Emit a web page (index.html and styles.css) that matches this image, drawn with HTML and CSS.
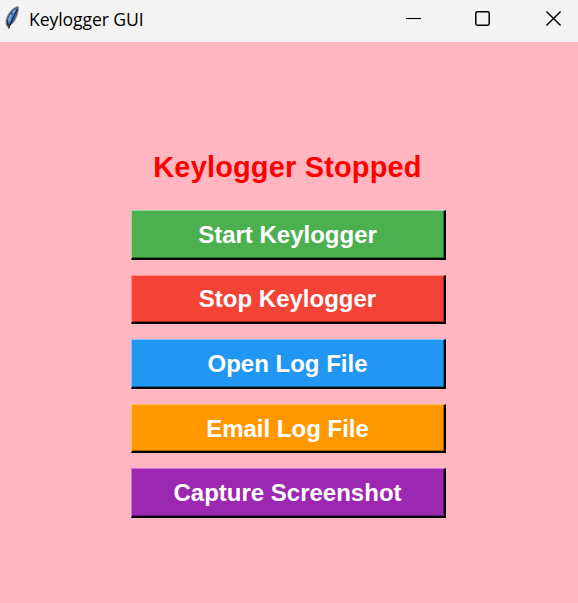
FILE: index.html
```html
<!DOCTYPE html>
<html lang="en">
<head>
<meta charset="utf-8">
<title>Keylogger GUI</title>
<link rel="stylesheet" href="styles.css">
</head>
<body>
<div class="window">
  <header class="titlebar">
    <svg class="feather" width="18" height="26" viewBox="0 0 18 26">
      <path d="M13.8 1.5 C9 2 4.5 8 2.2 14 L2 19.5 L4.6 23.3 L5.6 20.6 C10.5 18.5 14.3 10 14.6 2.5 Z" fill="#4a5360" stroke="#9a9ea4" stroke-width="1"/>
      <path d="M13.2 2.8 C8.5 5 4.5 10.5 3.4 17 L5.5 19 C10 16 13 9 13.2 2.8 Z" fill="#3b82d4"/>
      <path d="M11 5.2 C7.5 8.5 5.6 12.5 4.5 16" fill="none" stroke="#86b6ec" stroke-width="1.3"/>
      <path d="M13.4 4 C11 9.5 7.4 15.5 4.7 23.5" fill="none" stroke="#1b2129" stroke-width="1.1"/>
      <path d="M8 7.5 L7.6 10 M2.7 15 L4.4 20.5" fill="none" stroke="#1b2129" stroke-width="1"/>
    </svg>
    <span class="title">Keylogger GUI</span>
    <svg class="controls" width="156" height="16" viewBox="0 0 156 16">
      <path d="M0 8.5 H15" stroke="#000" stroke-width="1.1"/>
      <rect x="69.8" y="1.8" width="13.4" height="13.4" rx="1.6" fill="none" stroke="#000" stroke-width="1.5"/>
      <path d="M140.4 1.4 L154.6 15.6 M154.6 1.4 L140.4 15.6" stroke="#000" stroke-width="1.4"/>
    </svg>
  </header>
  <main class="content">
    <h1 class="status">Keylogger Stopped</h1>
    <button class="btn start">Start Keylogger</button>
    <button class="btn stop">Stop Keylogger</button>
    <button class="btn open">Open Log File</button>
    <button class="btn email">Email Log File</button>
    <button class="btn capture">Capture Screenshot</button>
  </main>
</div>
</body>
</html>
```
FILE: styles.css
```css
body {
  margin: 0;
}

.window {
  display: flex;
  flex-direction: column;
  height: 603px;
  overflow: hidden;
  background: #ffb6c1;
  font-family: "Liberation Sans", Arial, sans-serif;
}

.titlebar {
  display: flex;
  flex: none;
  height: 42px;
  box-sizing: border-box;
  padding: 5px 16px 0 4px;
  background: #f3f3f3;
}

.title {
  margin: 1px 0 0 7px;
  color: #000;
  font: 17.6px/26px "Open Sans", "Noto Sans", sans-serif;
  letter-spacing: -0.1px;
  white-space: nowrap;
}

.controls {
  margin: 5px 0 0 auto;
  overflow: visible;
}

.content {
  display: flex;
  flex-direction: column;
  align-items: center;
  padding-top: 109px;
}

.status {
  margin: 0 3px 26px 0;
  color: #f00;
  font-size: 29px;
  line-height: 33px;
  letter-spacing: 0.15px;
  white-space: nowrap;
}

.btn {
  width: 315px;
  height: 49.6px;
  margin: 0 2px 15px 0;
  padding: 1px 0 0;
  box-sizing: border-box;
  border: 2px solid;
  border-color: var(--light) #000 #000 var(--light);
  border-width: 1.5px 2px 2px 1.5px;
  box-shadow: inset -1px -1px var(--dark);
  background: var(--face);
  color: #fff;
  font: bold 24px/44px "Liberation Sans", Arial, sans-serif;
}

.start { --face: #4caf50; --light: #93e096; --dark: #2c7030; }
.stop { --face: #f44336; --light: #ff8c83; --dark: #9b2a22; }
.open { --face: #2196f3; --light: #7fc4ff; --dark: #155f9b; }
.email { --face: #ff9800; --light: #ffc35c; --dark: #a26100; }
.capture { --face: #9c27b0; --light: #d075e0; --dark: #631970; }
```
